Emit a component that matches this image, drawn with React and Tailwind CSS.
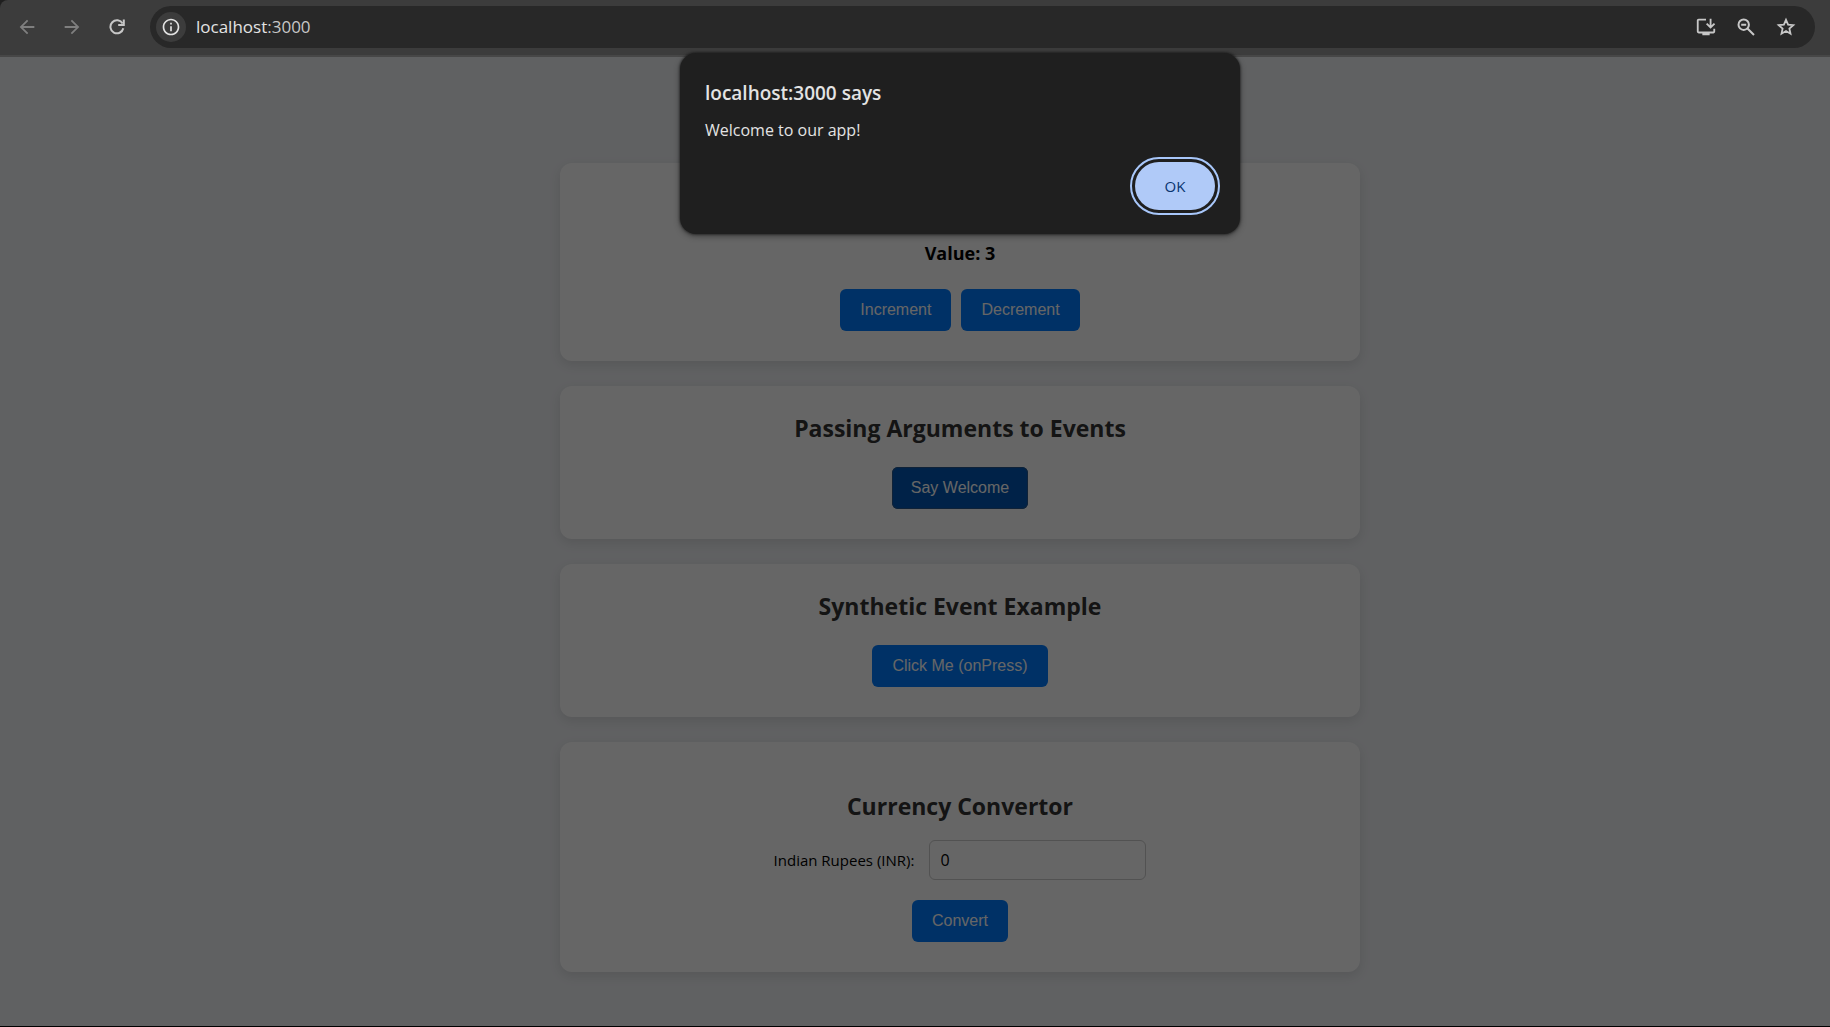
import React, { useState } from "react";
import { MdArrowBack, MdArrowForward, MdOutlineInfo, MdOutlineInstallDesktop } from "react-icons/md";

function ReloadIcon() {
  return (
    <svg viewBox="0 0 16 16" className="size-4" fill="none" stroke="currentColor" strokeWidth="2">
      <path d="M14.3 9.2A6.5 6.5 0 1 1 13.6 4.6" />
      <path d="M14.8 0.5V6H9.2" />
    </svg>
  );
}

function ZoomOutIcon() {
  return (
    <svg viewBox="0 0 18 18" className="size-[18px]" fill="none" stroke="currentColor" strokeWidth="2">
      <circle cx="6.7" cy="6.7" r="5.2" />
      <path d="M10.5 10.5L17 17M4.2 6.7H9.2" />
    </svg>
  );
}

function StarIcon() {
  return (
    <svg viewBox="0 0 20 20" className="size-5" fill="none" stroke="currentColor" strokeWidth="1.8" strokeLinejoin="miter">
      <path d="M10 2.8L12.1 7.6L17.3 8.1L13.4 11.6L14.5 16.7L10 14L5.5 16.7L6.6 11.6L2.7 8.1L7.9 7.6Z" />
    </svg>
  );
}

function IconButton({ label, className = "", children }) {
  return (
    <button aria-label={label} className={`flex shrink-0 items-center justify-center ${className}`}>
      {children}
    </button>
  );
}

function Toolbar() {
  return (
    <div className="bg-[#1f1f1f]">
      <header className="flex items-center rounded-tl-lg border-b-2 border-[#474747] bg-[#3c3c3c] pt-[6px] pr-[15px] pb-[7px] pl-3 text-[#c7c7c7]">
        <nav className="flex items-center gap-[15px]">
          <IconButton label="Back" className="size-[30px] text-[#7f7f7f]"><MdArrowBack size={22} /></IconButton>
          <IconButton label="Forward" className="size-[30px] text-[#7f7f7f]"><MdArrowForward size={22} /></IconButton>
          <IconButton label="Reload" className="size-[30px]"><ReloadIcon /></IconButton>
        </nav>
        <div className="ml-[18px] flex h-[42px] flex-1 items-center rounded-full bg-[#282828] pr-[18px] pl-[6px]">
          <IconButton label="Site information" className="size-[30px] rounded-full bg-[#3c3c3c] text-[#e3e3e3]"><MdOutlineInfo size={20} /></IconButton>
          <div className="ml-[10px] flex-1 font-['Open_Sans',sans-serif] text-[17px] text-[#e3e3e3]">
            localhost<span className="text-[#c7c7c7]">:3000</span>
          </div>
          <div className="flex items-center gap-[18px]">
            <IconButton label="Install app" className="size-[22px]"><MdOutlineInstallDesktop size={22} /></IconButton>
            <IconButton label="Zoom" className="size-[22px]"><ZoomOutIcon /></IconButton>
            <IconButton label="Bookmark" className="size-[22px]"><StarIcon /></IconButton>
          </div>
        </div>
      </header>
    </div>
  );
}

function Card({ title, padding = "pt-[25px]", children }) {
  return (
    <section className={`rounded-xl bg-white px-[25px] pb-[25px] text-center shadow-[0_4px_12px_rgba(0,0,0,0.1)] ${padding}`}>
      {title && <h2 className="mb-4 text-[23px] leading-[35px] font-bold text-[#333]">{title}</h2>}
      {children}
    </section>
  );
}

function Button({ active = false, children, ...props }) {
  return (
    <button
      className={`m-[5px] h-[42px] rounded-md font-['Liberation_Sans',sans-serif] text-base text-white ${active ? "bg-[#0056b3] px-[19px] ring-1 ring-[#26568c] ring-inset" : "bg-[#007bff] px-5"}`}
      {...props}
    >
      {children}
    </button>
  );
}

function AlertDialog() {
  return (
    <div role="dialog" aria-labelledby="alert-title" className="absolute top-[53px] left-[calc(50%+45px)] z-20 w-[560px] -translate-x-1/2 rounded-2xl bg-[#1f1f1f] px-[25px] pt-7 pb-6 text-[#e3e3e3] shadow-[0_0_2px_1px_rgba(0,0,0,0.35),0_2px_6px_rgba(0,0,0,0.4)]">
      <h1 id="alert-title" className="text-[19px] leading-6 font-semibold">localhost:3000 says</h1>
      <p className="mt-[13px] text-base leading-6">Welcome to our app!</p>
      <div className="mt-5 flex justify-end">
        <button className="h-12 w-20 rounded-full bg-[#b0caf8] text-[15px] font-medium text-[#0a3570] outline-2 outline-offset-[3px] outline-[#a8c7fa]">OK</button>
      </div>
    </div>
  );
}

export default function App() {
  const [value, setValue] = useState(3);
  const [rupees, setRupees] = useState("0");
  return (
    <div className="relative flex min-h-screen flex-col font-['Open_Sans',sans-serif]">
      <Toolbar />
      <div className="relative flex-1 border-b border-black bg-[#f0f2f5] pl-[90px]">
        <main className="mx-auto flex max-w-[800px] flex-col gap-[25px] pt-[106px] pb-10">
          <Card padding="pt-[78px]">
            <p className="mb-[19px] text-lg leading-6 font-bold text-black">Value: {value}</p>
            <Button onClick={() => setValue(value + 1)}>Increment</Button>
            <Button onClick={() => setValue(value - 1)}>Decrement</Button>
          </Card>
          <Card title="Passing Arguments to Events">
            <Button active>Say Welcome</Button>
          </Card>
          <Card title="Synthetic Event Example">
            <Button>Click Me (onPress)</Button>
          </Card>
          <Card title="Currency Convertor" padding="pt-[47px]">
            <form onSubmit={(event) => event.preventDefault()}>
              <div className="mb-[15px] flex items-center justify-center gap-[15px]">
                <label htmlFor="rupees" className="text-[15px]">Indian Rupees (INR):</label>
                <input id="rupees" value={rupees} onChange={(event) => setRupees(event.target.value)} className="h-10 w-[217px] rounded-md border border-[#ccc] px-[10px] text-base text-black" />
              </div>
              <Button type="submit">Convert</Button>
            </form>
          </Card>
        </main>
        <div className="absolute inset-0 bg-black/60" />
      </div>
      <AlertDialog />
    </div>
  );
}
